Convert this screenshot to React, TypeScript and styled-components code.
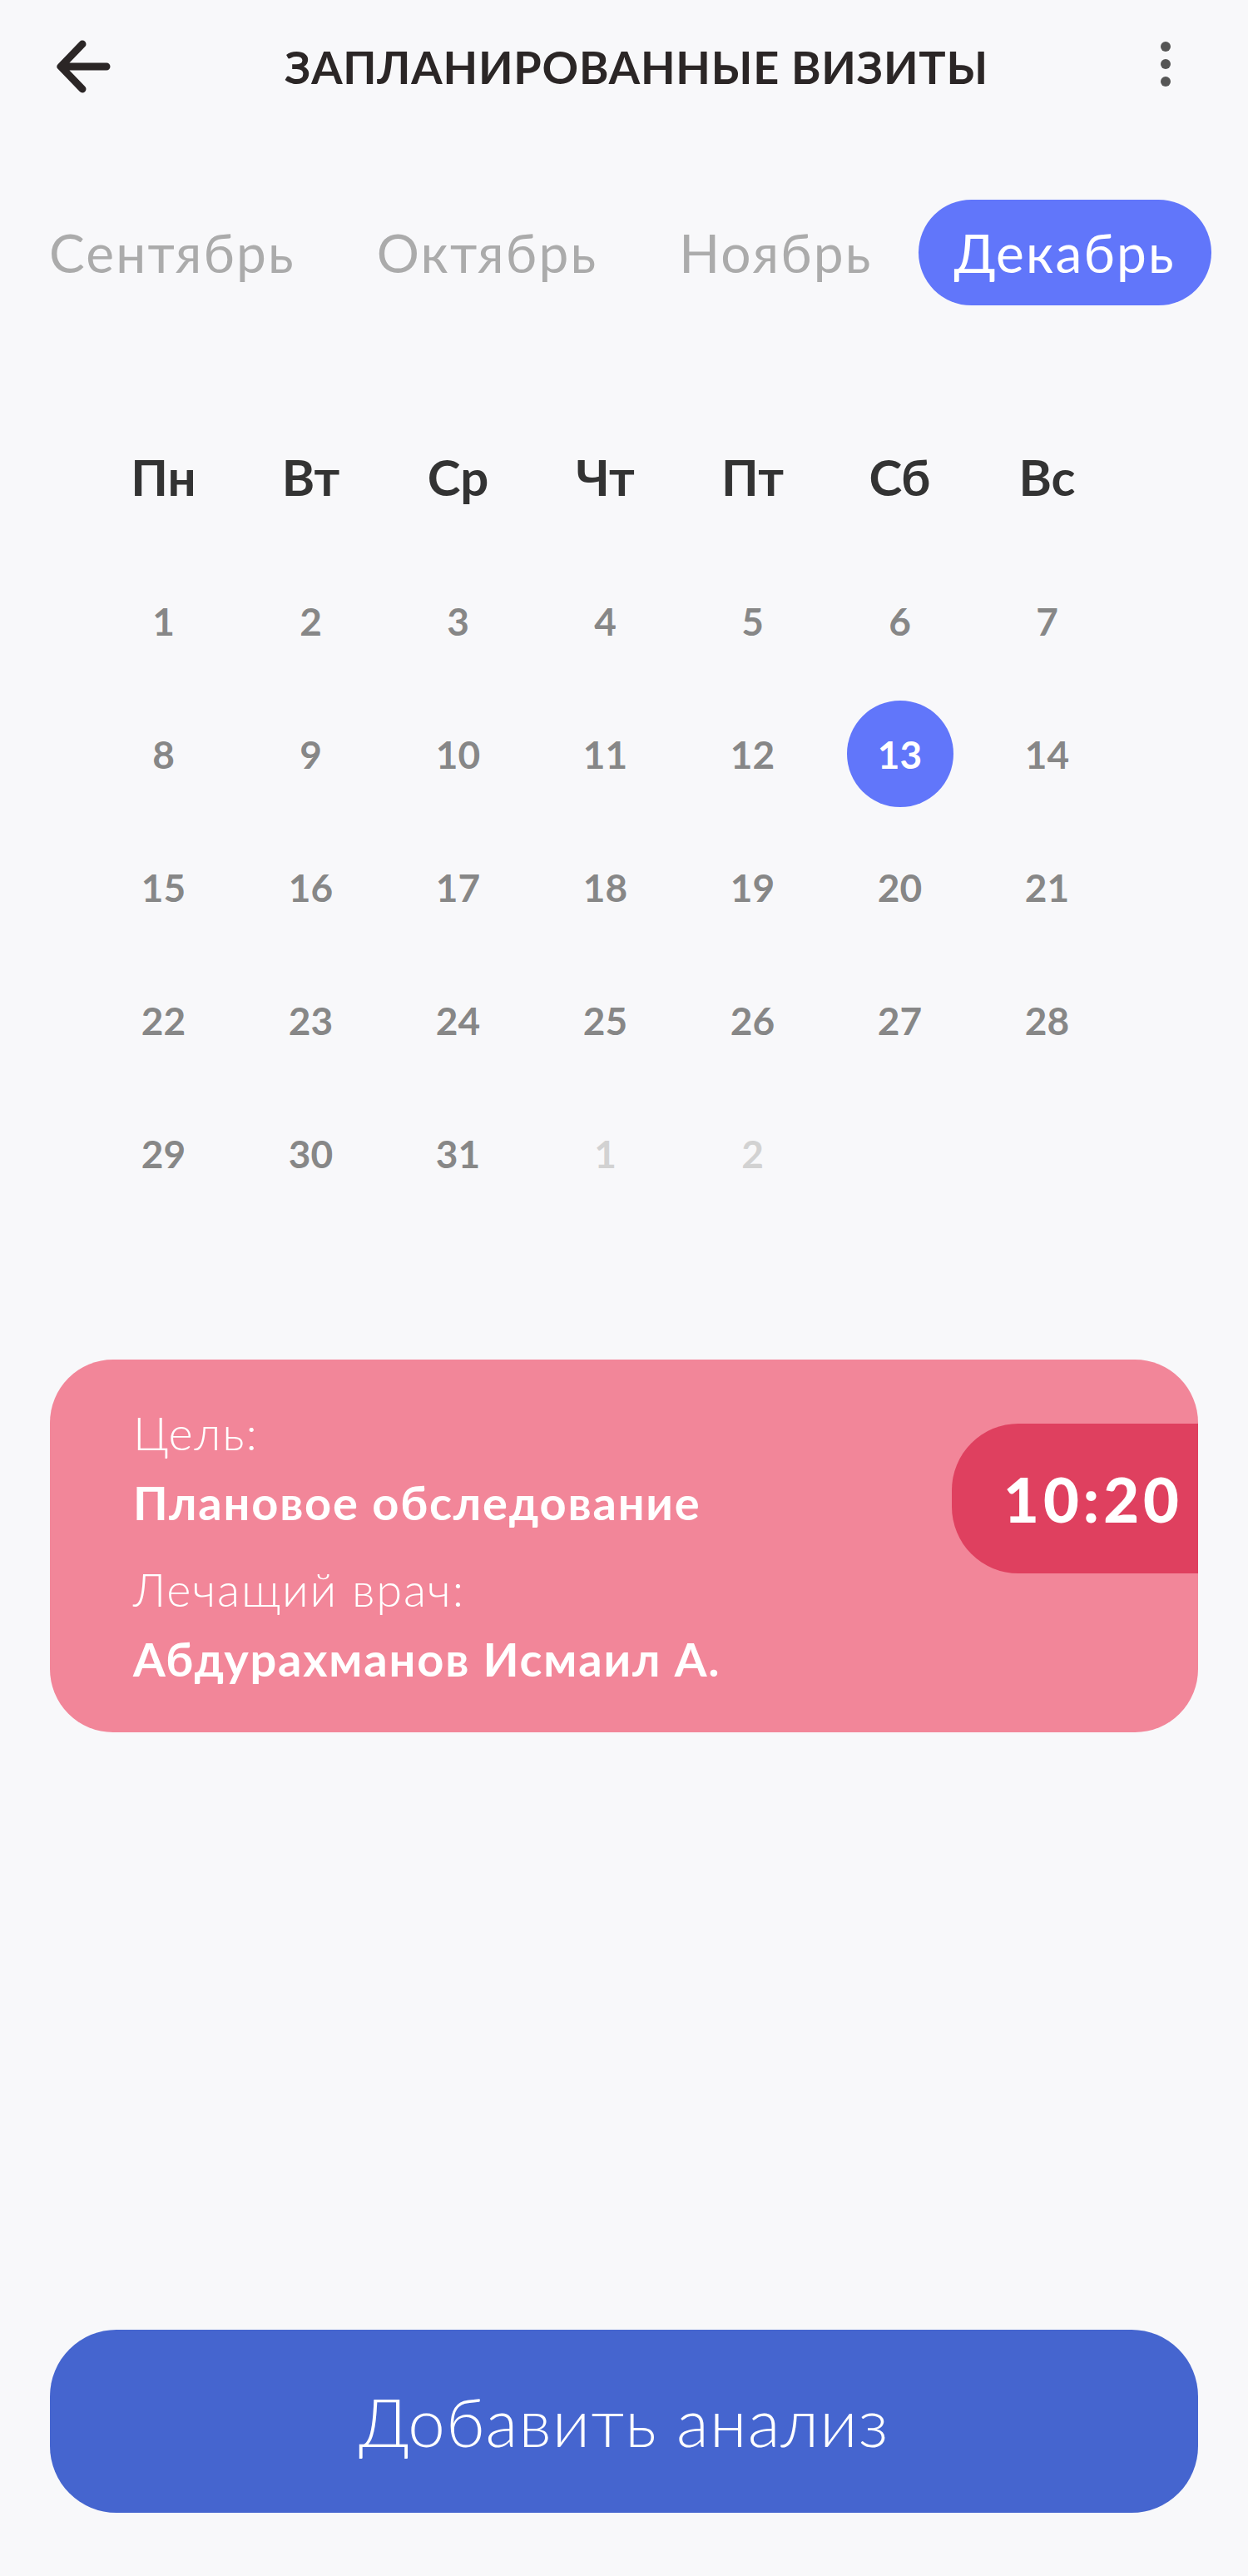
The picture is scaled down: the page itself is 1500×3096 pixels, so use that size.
import React from "react";
import styled, { createGlobalStyle } from "styled-components";

const Global = createGlobalStyle`
  html, body { margin: 0; padding: 0; background: #f8f8fa; }
  body { font-family: Lato, "Open Sans", sans-serif; }
  * { box-sizing: border-box; }
`;

const Page = styled.div`
  width: 1500px;
  min-height: 3096px;
  display: flex;
  flex-direction: column;
  background: #f8f8fa;
`;

const Header = styled.header`
  height: 160px;
  display: grid;
  grid-template-columns: auto 1fr auto;
  align-items: center;
  padding: 0 92px 0 66px;
`;

const IconButton = styled.button`
  border: 0;
  background: none;
  padding: 0;
  display: flex;
  align-items: center;
  justify-content: center;
  cursor: pointer;
`;

const Title = styled.h1`
  margin: 0;
  text-align: center;
  font-family: Lato, "Open Sans", sans-serif;
  font-weight: 700;
  font-size: 54px;
  letter-spacing: 0.8px;
  color: #2b2626;
`;

const Tabs = styled.nav`
  margin-top: 80px;
  display: flex;
  justify-content: space-between;
  align-items: center;
  padding: 0 44px 0 16px;
`;

const Tab = styled.div<{ $active?: boolean }>`
  height: 127px;
  padding: 0 43px;
  border-radius: 64px;
  display: flex;
  align-items: center;
  font-family: Lato, "Open Sans", sans-serif;
  font-size: 64px;
  letter-spacing: 2.2px;
  font-weight: 400;
  color: ${(p) => (p.$active ? "#ffffff" : "#ababab")};
  background: ${(p) => (p.$active ? "#6176fa" : "transparent")};
`;

const Calendar = styled.div`
  margin-top: 130px;
  padding-left: 108px;
  display: grid;
  grid-template-columns: repeat(7, 177px);
  grid-auto-rows: 160px;
`;

const WeekDay = styled.div`
  display: flex;
  align-items: center;
  justify-content: center;
  font-family: Lato, "Open Sans", sans-serif;
  font-weight: 700;
  font-size: 60px;
  color: #333333;
  margin-bottom: 9px;
`;

const DayCell = styled.div`
  display: flex;
  align-items: center;
  justify-content: center;
  margin-top: 9px;
  margin-bottom: -9px;
`;

const Day = styled.span<{ $selected?: boolean; $muted?: boolean }>`
  width: 128px;
  height: 128px;
  border-radius: 50%;
  display: flex;
  align-items: center;
  justify-content: center;
  font-family: Lato, "Open Sans", sans-serif;
  font-weight: 700;
  font-size: 46px;
  color: ${(p) => (p.$selected ? "#ffffff" : p.$muted ? "#d2d2d2" : "#878787")};
  background: ${(p) => (p.$selected ? "#6176fa" : "transparent")};
`;

const Card = styled.section`
  margin: 177px 60px 0;
  height: 448px;
  border-radius: 76px;
  background: #f28699;
  display: flex;
  align-items: flex-start;
  justify-content: space-between;
  padding: 46px 0 0 100px;
  overflow: hidden;
`;

const CardText = styled.div`
  display: flex;
  flex-direction: column;
  color: #ffffff;
  font-family: Lato, "Open Sans", sans-serif;
`;

const Label = styled.div`
  font-size: 56px;
  font-weight: 300;
  letter-spacing: 1.8px;
  line-height: 84px;
`;

const Value = styled.div<{ $gap?: boolean }>`
  font-size: 56px;
  font-weight: 700;
  letter-spacing: 1.8px;
  line-height: 84px;
  margin-bottom: ${(p) => (p.$gap ? "20px" : "0")};
`;

const TimeBadge = styled.div`
  margin-top: 31px;
  width: 296px;
  height: 180px;
  border-radius: 80px 0 0 80px;
  background: #df405f;
  display: flex;
  align-items: center;
  justify-content: flex-end;
  padding-right: 18px;
  color: #ffffff;
  font-family: Lato, "Open Sans", sans-serif;
  font-weight: 900;
  font-size: 74px;
  letter-spacing: 5px;
`;

const Footer = styled.div`
  margin-top: auto;
  padding: 0 60px 76px;
`;

const PrimaryButton = styled.button`
  width: 100%;
  height: 220px;
  border: 0;
  border-radius: 80px;
  background: #4565cf;
  color: #ffffff;
  font-family: Lato, "Open Sans", sans-serif;
  font-weight: 300;
  font-size: 80px;
  letter-spacing: 1.2px;
  cursor: pointer;
`;

const BackIcon = () => (
  <svg width="70" height="70" viewBox="0 0 70 70" fill="none">
    <path
      d="M62 35H8M33 8L7 35l26 27"
      stroke="#2b2626"
      strokeWidth="9"
      strokeLinecap="round"
      strokeLinejoin="round"
    />
  </svg>
);

const MoreIcon = () => (
  <svg width="14" height="64" viewBox="0 0 14 64" fill="#555555">
    <circle cx="7" cy="8" r="6" />
    <circle cx="7" cy="29" r="6" />
    <circle cx="7" cy="50" r="6" />
  </svg>
);

const months = ["Сентябрь", "Октябрь", "Ноябрь", "Декабрь"];
const weekDays = ["Пн", "Вт", "Ср", "Чт", "Пт", "Сб", "Вс"];

type D = { n: number; muted?: boolean };
const days: D[] = [
  ...Array.from({ length: 31 }, (_, i) => ({ n: i + 1 })),
  { n: 1, muted: true },
  { n: 2, muted: true },
];

export default function App() {
  return (
    <>
      <Global />
      <Page>
        <Header>
          <IconButton aria-label="Назад">
            <BackIcon />
          </IconButton>
          <Title>ЗАПЛАНИРОВАННЫЕ ВИЗИТЫ</Title>
          <IconButton aria-label="Меню">
            <MoreIcon />
          </IconButton>
        </Header>

        <Tabs>
          {months.map((m) => (
            <Tab key={m} $active={m === "Декабрь"}>
              {m}
            </Tab>
          ))}
        </Tabs>

        <Calendar>
          {weekDays.map((w) => (
            <WeekDay key={w}>{w}</WeekDay>
          ))}
          {days.map((d, i) => (
            <DayCell key={i}>
              <Day $muted={d.muted} $selected={!d.muted && d.n === 13}>
                {d.n}
              </Day>
            </DayCell>
          ))}
        </Calendar>

        <Card>
          <CardText>
            <Label>Цель:</Label>
            <Value $gap>Плановое обследование</Value>
            <Label>Лечащий врач:</Label>
            <Value>Абдурахманов Исмаил А.</Value>
          </CardText>
          <TimeBadge>10:20</TimeBadge>
        </Card>

        <Footer>
          <PrimaryButton>Добавить анализ</PrimaryButton>
        </Footer>
      </Page>
    </>
  );
}
